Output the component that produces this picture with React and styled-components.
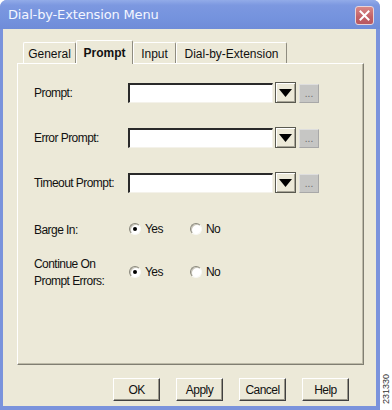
import React from "react";
import styled, { createGlobalStyle } from "styled-components";

const Global = createGlobalStyle`
  html, body { margin: 0; padding: 0; background: #fff; }
  body { width: 392px; height: 410px; overflow: hidden; font-family: "Liberation Sans", Arial, sans-serif; }
`;

const Page = styled.div`
  display: flex;
  width: 392px;
  height: 410px;
`;

const Window = styled.div`
  width: 380px;
  height: 410px;
  display: flex;
  flex-direction: column;
  background: #7a93dc;
  border-radius: 7px 7px 0 0;
  overflow: hidden;
`;

const TitleBar = styled.div`
  height: 29px;
  flex: none;
  display: flex;
  align-items: center;
  justify-content: space-between;
  padding: 0 6px 0 8px;
  background: linear-gradient(to bottom, #92abe8 0%, #7c98e0 18%, #7593de 60%, #6f8cd8 100%);
`;

const Title = styled.span`
  color: #f4f6ff;
  font-family: "DejaVu Sans", "Liberation Sans", sans-serif;
  font-size: 13px;
  letter-spacing: -0.15px;
  padding-bottom: 1px;
`;

const CloseBtn = styled.div`
  width: 19px;
  height: 19px;
  box-sizing: border-box;
  border: 1px solid #e8d4d8;
  border-radius: 3px;
  background: linear-gradient(to bottom, #d98886, #c26066 60%, #b95860);
  display: flex;
  align-items: center;
  justify-content: center;
  margin-top: 2px;
`;

const Body = styled.div`
  flex: 1;
  margin: 0 4px 4px 3px;
  background: #ece9d8;
  padding: 11px 12px 0 14px;
  display: flex;
  flex-direction: column;
`;

const TabRow = styled.div`
  display: flex;
  align-items: flex-end;
  padding-left: 6px;
  height: 23px;
  position: relative;
  z-index: 1;
`;

const Tab = styled.div`
  width: ${(p) => p.$w}px;
  height: ${(p) => (p.$active ? 24 : 21)}px;
  margin-bottom: ${(p) => (p.$active ? -1 : 0)}px;
  box-sizing: border-box;
  display: flex;
  align-items: center;
  justify-content: center;
  padding-top: ${(p) => (p.$active ? 0 : 2)}px;
  background: #ece9d8;
  border-top: 1px solid #fff;
  border-left: 1px solid #fff;
  border-right: 1px solid #8f8c80;
  border-radius: 2px 2px 0 0;
  font-size: 12px;
  font-weight: ${(p) => (p.$active ? 700 : 400)};
  color: #111;
`;

const Panel = styled.div`
  width: 347px;
  height: 302px;
  box-sizing: border-box;
  border-top: 1px solid #fff;
  border-left: 1px solid #fff;
  border-right: 1px solid #807e72;
  border-bottom: 1px solid #807e72;
  box-shadow: inset -1px -1px 0 #bdbaa8;
  padding: 18px 0 0 16px;
  display: flex;
  flex-direction: column;
`;

const Row = styled.div`
  display: flex;
  align-items: center;
  margin-top: ${(p) => p.$mt || 0}px;
  height: ${(p) => p.$h}px;
`;

const narrow = `
  font-family: "Liberation Sans", Arial, sans-serif;
  font-size: 12px;
  letter-spacing: -0.55px;
  color: #111;
`;

const Label = styled.div`
  width: 94px;
  flex: none;
  ${narrow}
  line-height: 17px;
  padding-top: 2px;
`;

const TextBox = styled.div`
  width: 145px;
  height: 20px;
  box-sizing: border-box;
  background: #fff;
  border-top: 2px solid #2a2a2a;
  border-left: 2px solid #2a2a2a;
  border-right: 1px solid #f4f2ea;
  border-bottom: 1px solid #f4f2ea;
`;

const DropBtn = styled.div`
  width: 21px;
  height: 21px;
  margin-left: 2px;
  box-sizing: border-box;
  border: 1px solid #5a5a50;
  box-shadow: inset 1px 1px 0 #fff, inset -1px -1px 0 #a8a598;
  background: #ece9d8;
  display: flex;
  align-items: center;
  justify-content: center;
`;

const MoreBtn = styled.div`
  width: 20px;
  height: 19px;
  margin-left: 3px;
  align-self: flex-end;
  box-sizing: border-box;
  background: #c6c6c4;
  border: 1px solid #dedede;
  border-right-color: #a8a8a8;
  border-bottom-color: #a8a8a8;
  color: #6a6a6a;
  font-size: 10px;
  line-height: 10px;
  display: flex;
  align-items: flex-end;
  justify-content: center;
  padding-bottom: 3px;
`;

const Option = styled.label`
  display: flex;
  align-items: center;
  width: ${(p) => p.$w}px;
  margin-left: ${(p) => p.$ml || 0}px;
  ${narrow}
`;

const Radio = styled.span`
  width: 12px;
  height: 12px;
  box-sizing: border-box;
  border-radius: 50%;
  border: 1px solid;
  border-color: #8a887c #f8f8f4 #f8f8f4 #8a887c;
  box-shadow: inset 1px 1px 0 #c8c5b8;
  background: #fff;
  margin-right: 4px;
  display: flex;
  align-items: center;
  justify-content: center;
  &::after {
    content: "";
    width: 4px;
    height: 4px;
    border-radius: 50%;
    background: ${(p) => (p.$on ? "#000" : "transparent")};
  }
`;

const Footer = styled.div`
  display: flex;
  gap: 16px;
  padding-left: 96px;
  margin-top: 13px;
`;

const Button = styled.div`
  width: 47px;
  height: 23px;
  box-sizing: border-box;
  background: #ece9d8;
  border-top: 1px solid #fff;
  border-left: 1px solid #fff;
  border-right: 1px solid #404040;
  border-bottom: 1px solid #404040;
  box-shadow: inset -1px -1px 0 #9a978a;
  display: flex;
  align-items: center;
  justify-content: center;
  ${narrow}
`;

const Strip = styled.div`
  width: 12px;
  display: flex;
  flex-direction: column;
  justify-content: flex-end;
  align-items: center;
  padding-bottom: 6px;
  box-sizing: border-box;
`;

const FigNo = styled.span`
  writing-mode: vertical-rl;
  transform: rotate(180deg);
  font-family: "Liberation Sans", Arial, sans-serif;
  font-size: 9px;
  color: #333;
`;

const Arrow = () => (
  <svg width="13" height="8" viewBox="0 0 13 8">
    <polygon points="0,0 13,0 6.5,8" fill="#000" />
  </svg>
);

const XIcon = () => (
  <svg width="11" height="11" viewBox="0 0 11 11">
    <path d="M1.5 1.5 L9.5 9.5 M9.5 1.5 L1.5 9.5" stroke="#fff" strokeWidth="2" strokeLinecap="square" />
  </svg>
);

const fields = ["Prompt:", "Error Prompt:", "Timeout Prompt:"];

export default function App() {
  return (
    <Page>
      <Global />
      <Window>
        <TitleBar>
          <Title>Dial-by-Extension Menu</Title>
          <CloseBtn>
            <XIcon />
          </CloseBtn>
        </TitleBar>
        <Body>
          <TabRow>
            <Tab $w={53}>General</Tab>
            <Tab $w={57} $active>Prompt</Tab>
            <Tab $w={43}>Input</Tab>
            <Tab $w={111}>Dial-by-Extension</Tab>
          </TabRow>
          <Panel>
            {fields.map((f, i) => (
              <Row key={f} $h={21} $mt={i ? 24 : 0}>
                <Label>{f}</Label>
                <TextBox />
                <DropBtn>
                  <Arrow />
                </DropBtn>
                <MoreBtn>...</MoreBtn>
              </Row>
            ))}
            <Row $h={16} $mt={28}>
              <Label>Barge In:</Label>
              <Option $w={61} $ml={1}>
                <Radio $on />
                Yes
              </Option>
              <Option $w={40}>
                <Radio />
                No
              </Option>
            </Row>
            <Row $h={34} $mt={18}>
              <Label>
                Continue On
                <br />
                Prompt Errors:
              </Label>
              <Option $w={61} $ml={1}>
                <Radio $on />
                Yes
              </Option>
              <Option $w={40}>
                <Radio />
                No
              </Option>
            </Row>
          </Panel>
          <Footer>
            <Button>OK</Button>
            <Button>Apply</Button>
            <Button>Cancel</Button>
            <Button>Help</Button>
          </Footer>
        </Body>
      </Window>
      <Strip>
        <FigNo>231330</FigNo>
      </Strip>
    </Page>
  );
}
